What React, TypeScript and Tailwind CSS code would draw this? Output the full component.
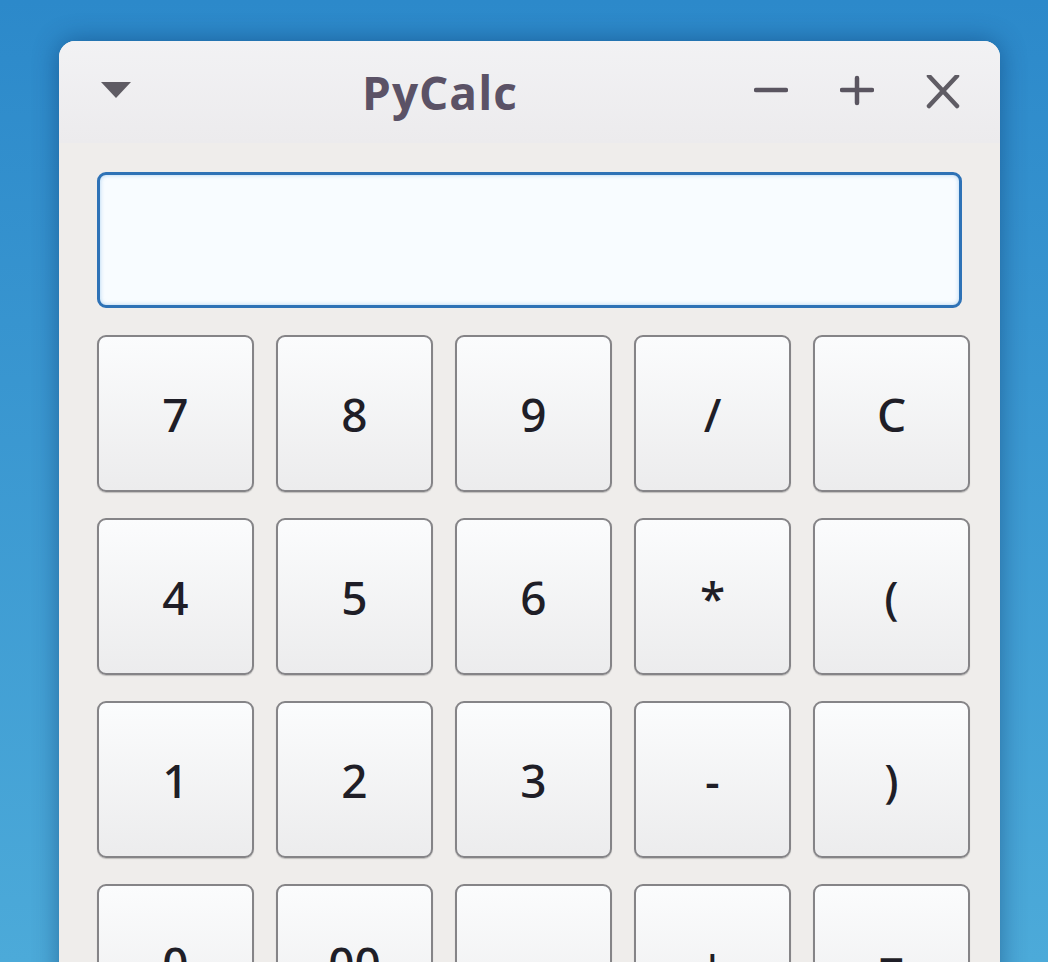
import React from 'react';

const keys = [
  '7', '8', '9', '/', 'C',
  '4', '5', '6', '*', '(',
  '1', '2', '3', '-', ')',
  '0', '00', '.', '+', '=',
];

const TitleBar: React.FC = () => (
  <div className="flex h-[102px] items-center rounded-t-[16px] bg-gradient-to-b from-[#f2f2f4] to-[#ecebed] pl-[41px] pr-[40px]">
    <svg width="32" height="18" viewBox="0 0 32 18" className="mt-[-4px]">
      <path d="M1 1 L31 1 L16 17 Z" fill="#5e5b63" />
    </svg>
    <span
      className="ml-[230px] text-[46px] font-bold tracking-[1px] text-[#5b5266]"
      style={{ fontFamily: '"Open Sans", "Noto Sans", sans-serif' }}
    >
      PyCalc
    </span>
    <div className="ml-auto flex items-center gap-[52px]">
      {/* minimize */}
      <svg width="34" height="34" viewBox="0 0 34 34">
        <path d="M2 15 H32" stroke="#5a5560" strokeWidth="4.5" strokeLinecap="round" />
      </svg>
      {/* maximize */}
      <svg width="34" height="34" viewBox="0 0 34 34">
        <path d="M2 15 H32 M17 3 V28" stroke="#5a5560" strokeWidth="4.5" strokeLinecap="round" />
      </svg>
      {/* close */}
      <svg width="34" height="34" viewBox="0 0 34 34">
        <path d="M3 1 L31 31 M31 1 L3 31" stroke="#5f5c64" strokeWidth="4.5" strokeLinecap="round" />
      </svg>
    </div>
  </div>
);

const App: React.FC = () => {
  return (
    <div className="h-[962px] w-[1048px] overflow-hidden bg-gradient-to-b from-[#2c89ca] to-[#4caad9] pl-[59px] pt-[41px]">
      <div
        className="h-[1000px] w-[941px] rounded-t-[16px] bg-[#efedeb] shadow-[0_0_26px_rgba(0,40,90,0.45)]"
        style={{ fontFamily: '"Noto Sans", "Open Sans", sans-serif' }}
      >
        <TitleBar />

        <div className="pl-[38px] pt-[29px]">
          {/* display */}
          <div className="h-[136px] w-[865px] rounded-[9px] border-[3px] border-[#2e72b6] bg-[#f8fcff] shadow-[inset_0_0_4px_rgba(120,180,230,0.6)]" />

          {/* keypad */}
          <div className="mt-[27px] grid grid-cols-[repeat(5,157px)] gap-x-[22px] gap-y-[26px]">
            {keys.map((k) => (
              <button
                key={k}
                className="flex h-[157px] w-[157px] items-center justify-center rounded-[9px] border-2 border-[#858487] bg-gradient-to-b from-[#fbfcfd] to-[#ececed] text-[46px] font-medium leading-none text-[#1f1e27] shadow-[0_1px_1px_rgba(0,0,0,0.2)]"
              >
                {k}
              </button>
            ))}
          </div>
        </div>
      </div>
    </div>
  );
};

export default App;
